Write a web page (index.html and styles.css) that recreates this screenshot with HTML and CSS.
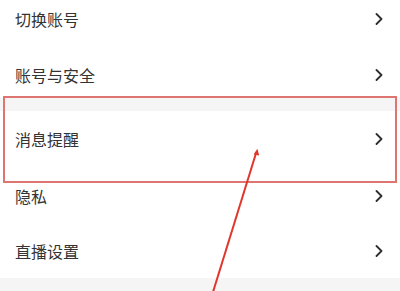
FILE: index.html
```html
<!DOCTYPE html>
<html lang="zh-CN">
<head>
<meta charset="utf-8">
<link rel="stylesheet" href="styles.css">
</head>
<body>
<div class="page">
  <div class="group group--top">
    <div class="row"><span class="label">切换账号</span><svg class="chev" viewBox="0 0 8 12"><path d="M1.5 1 L6.5 6 L1.5 11"/></svg></div>
    <div class="row row--short"><span class="label">账号与安全</span><svg class="chev" viewBox="0 0 8 12"><path d="M1.5 1 L6.5 6 L1.5 11"/></svg></div>
  </div>
  <div class="sep"></div>
  <div class="group">
    <div class="row row--tall"><span class="label">消息提醒</span><svg class="chev" viewBox="0 0 8 12"><path d="M1.5 1 L6.5 6 L1.5 11"/></svg></div>
    <div class="row"><span class="label">隐私</span><svg class="chev" viewBox="0 0 8 12"><path d="M1.5 1 L6.5 6 L1.5 11"/></svg></div>
    <div class="row row--last"><span class="label">直播设置</span><svg class="chev" viewBox="0 0 8 12"><path d="M1.5 1 L6.5 6 L1.5 11"/></svg></div>
  </div>
  <div class="sep sep--bottom"></div>

  <div class="highlight"></div>
  <svg class="arrow" viewBox="0 0 400 291" width="400" height="291">
    <line x1="213" y1="292" x2="256.4" y2="152" />
    <polygon points="257.4,148.8 253.6,154.6 259.2,155.6" />
  </svg>
</div>
</body>
</html>
```
FILE: styles.css
```css
html, body {
  margin: 0;
  padding: 0;
  background: #ffffff;
}

.page {
  position: relative;
  width: 400px;
  height: 291px;
  overflow: hidden;
  font-family: "Noto Sans CJK SC", "Noto Sans", sans-serif;
  color: #333333;
}

.group {
  display: flex;
  flex-direction: column;
  background: #ffffff;
}

.group--top {
  margin-top: -9px;
}

.row {
  height: 56px;
  box-sizing: border-box;
  display: flex;
  align-items: flex-start;
  justify-content: space-between;
  padding: 20px 17px 0 15px;
}

.row--short {
  height: 51px;
}

.row--tall {
  height: 57px;
  padding-top: 20px;
}

.row--last {
  height: 54px;
  padding-top: 19px;
}

.label {
  font-size: 16px;
  line-height: 17px;
  letter-spacing: 0;
}

.chev {
  width: 8px;
  height: 12px;
  margin-top: 2px;
  fill: none;
  stroke: #2e2e2e;
  stroke-width: 1.8;
  stroke-linecap: round;
  stroke-linejoin: round;
}

.sep {
  height: 13px;
  background: #f5f5f6;
}

.sep--bottom {
  height: 13px;
}

.highlight {
  position: absolute;
  left: 3px;
  top: 96px;
  width: 394px;
  height: 87px;
  box-sizing: border-box;
  border: 2px solid #de7570;
}

.arrow {
  position: absolute;
  left: 0;
  top: 0;
}

.arrow line {
  stroke: #e0362c;
  stroke-width: 2;
}

.arrow polygon {
  fill: #e0362c;
}
```
